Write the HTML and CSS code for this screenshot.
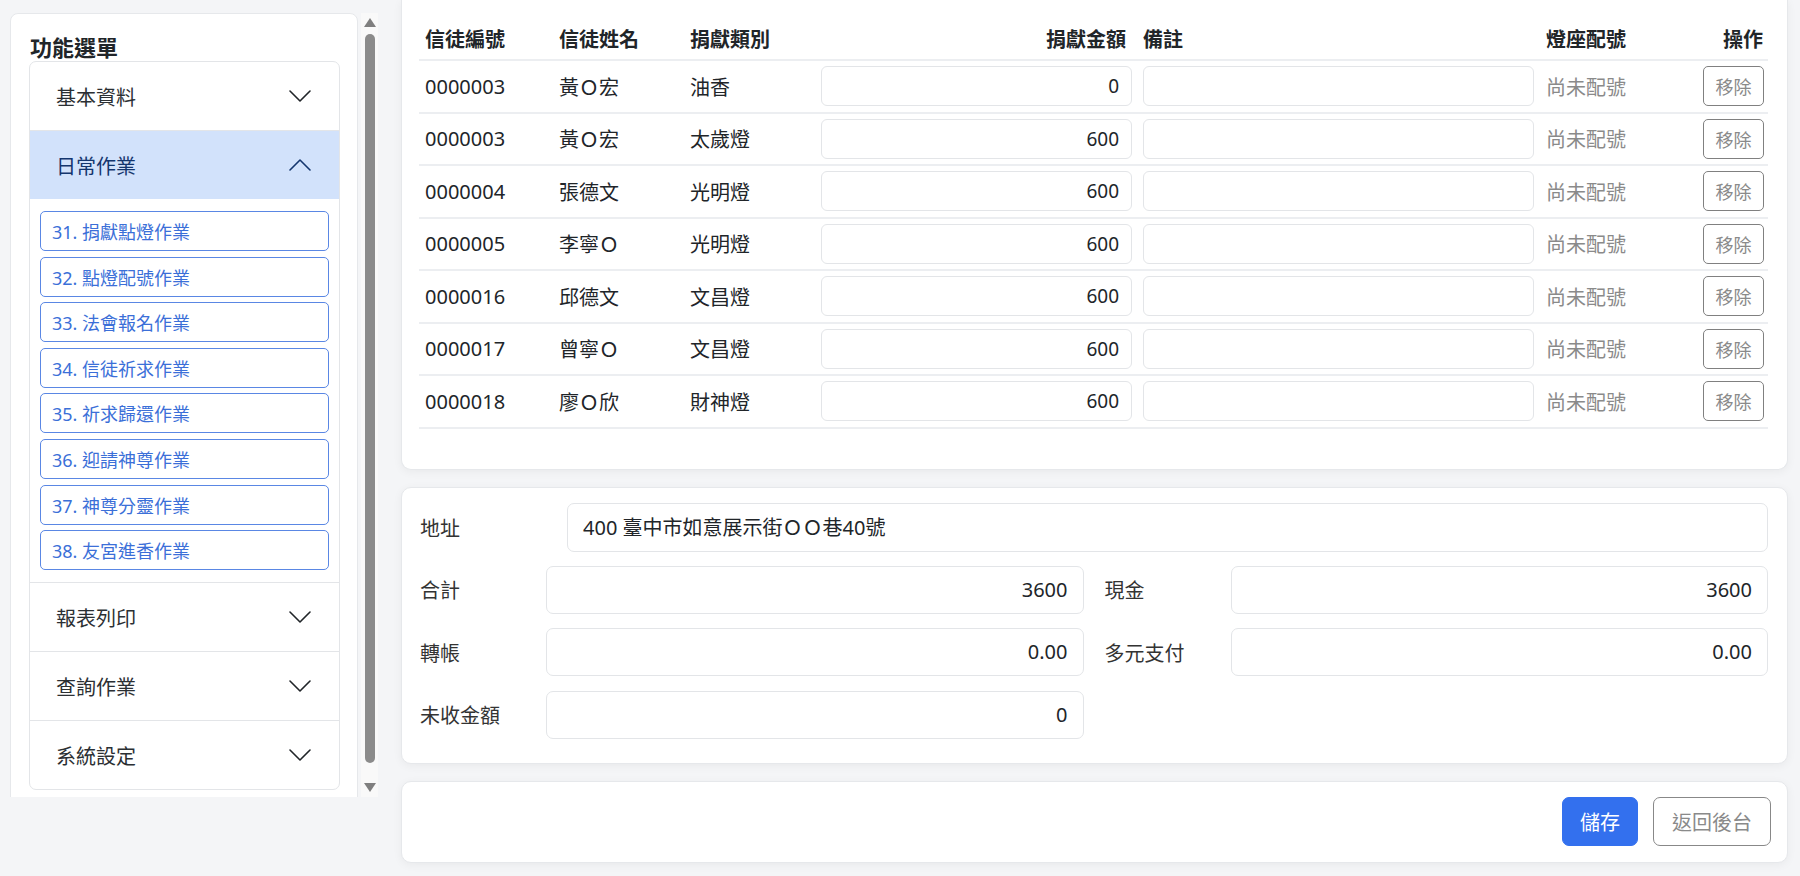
FILE: index.html
```html
<!DOCTYPE html>
<html lang="zh-Hant">
<head>
<meta charset="utf-8">
<title>捐獻點燈作業</title>
<link rel="stylesheet" href="styles.css">
</head>
<body>
<div class="page">
  <aside class="sidebar">
    <div class="side-card">
      <div class="side-title">功能選單</div>
      <div class="accordion">
        <div class="acc-item">
          <div class="acc-head"><span>基本資料</span><svg class="chev" viewBox="0 0 22 12" width="22" height="12"><path d="M1 1 L11 11 L21 1"/></svg></div>
        </div>
        <div class="acc-item active">
          <div class="acc-head"><span>日常作業</span><svg class="chev" viewBox="0 0 22 12" width="22" height="12"><path d="M1 11 L11 1 L21 11"/></svg></div>
          <div class="acc-body">
            <div class="sub-link">31. 捐獻點燈作業</div>
            <div class="sub-link">32. 點燈配號作業</div>
            <div class="sub-link">33. 法會報名作業</div>
            <div class="sub-link">34. 信徒祈求作業</div>
            <div class="sub-link">35. 祈求歸還作業</div>
            <div class="sub-link">36. 迎請神尊作業</div>
            <div class="sub-link">37. 神尊分靈作業</div>
            <div class="sub-link">38. 友宮進香作業</div>
          </div>
        </div>
        <div class="acc-item">
          <div class="acc-head"><span>報表列印</span><svg class="chev" viewBox="0 0 22 12" width="22" height="12"><path d="M1 1 L11 11 L21 1"/></svg></div>
        </div>
        <div class="acc-item">
          <div class="acc-head"><span>查詢作業</span><svg class="chev" viewBox="0 0 22 12" width="22" height="12"><path d="M1 1 L11 11 L21 1"/></svg></div>
        </div>
        <div class="acc-item">
          <div class="acc-head"><span>系統設定</span><svg class="chev" viewBox="0 0 22 12" width="22" height="12"><path d="M1 1 L11 11 L21 1"/></svg></div>
        </div>
      </div>
    </div>
    <div class="scrollbar">
      <div class="sb-up"></div>
      <div class="sb-thumb"></div>
      <div class="sb-down"></div>
    </div>
  </aside>

  <main class="main">
    <section class="panel panel-table">
      <div class="trow thead">
        <div class="c">信徒編號</div>
        <div class="c">信徒姓名</div>
        <div class="c">捐獻類別</div>
        <div class="c c-amt-h">捐獻金額</div>
        <div class="c c-note">備註</div>
        <div class="c">燈座配號</div>
        <div class="c c-op">操作</div>
      </div>
      <div class="trow">
        <div class="c">0000003</div><div class="c">黃Ｏ宏</div><div class="c">油香</div>
        <div class="c"><div class="tinput num">0</div></div>
        <div class="c c-note"><div class="tinput"></div></div>
        <div class="c muted">尚未配號</div>
        <div class="c c-op"><div class="btn-remove">移除</div></div>
      </div>
      <div class="trow">
        <div class="c">0000003</div><div class="c">黃Ｏ宏</div><div class="c">太歲燈</div>
        <div class="c"><div class="tinput num">600</div></div>
        <div class="c c-note"><div class="tinput"></div></div>
        <div class="c muted">尚未配號</div>
        <div class="c c-op"><div class="btn-remove">移除</div></div>
      </div>
      <div class="trow">
        <div class="c">0000004</div><div class="c">張德文</div><div class="c">光明燈</div>
        <div class="c"><div class="tinput num">600</div></div>
        <div class="c c-note"><div class="tinput"></div></div>
        <div class="c muted">尚未配號</div>
        <div class="c c-op"><div class="btn-remove">移除</div></div>
      </div>
      <div class="trow">
        <div class="c">0000005</div><div class="c">李寧Ｏ</div><div class="c">光明燈</div>
        <div class="c"><div class="tinput num">600</div></div>
        <div class="c c-note"><div class="tinput"></div></div>
        <div class="c muted">尚未配號</div>
        <div class="c c-op"><div class="btn-remove">移除</div></div>
      </div>
      <div class="trow">
        <div class="c">0000016</div><div class="c">邱德文</div><div class="c">文昌燈</div>
        <div class="c"><div class="tinput num">600</div></div>
        <div class="c c-note"><div class="tinput"></div></div>
        <div class="c muted">尚未配號</div>
        <div class="c c-op"><div class="btn-remove">移除</div></div>
      </div>
      <div class="trow">
        <div class="c">0000017</div><div class="c">曾寧Ｏ</div><div class="c">文昌燈</div>
        <div class="c"><div class="tinput num">600</div></div>
        <div class="c c-note"><div class="tinput"></div></div>
        <div class="c muted">尚未配號</div>
        <div class="c c-op"><div class="btn-remove">移除</div></div>
      </div>
      <div class="trow">
        <div class="c">0000018</div><div class="c">廖Ｏ欣</div><div class="c">財神燈</div>
        <div class="c"><div class="tinput num">600</div></div>
        <div class="c c-note"><div class="tinput"></div></div>
        <div class="c muted">尚未配號</div>
        <div class="c c-op"><div class="btn-remove">移除</div></div>
      </div>
    </section>

    <section class="panel panel-form">
      <div class="addr-row">
        <div class="flabel addr-label">地址</div>
        <div class="finput addr-input">400 臺中市如意展示街ＯＯ巷40號</div>
      </div>
      <div class="form-grid">
        <div class="field"><div class="flabel">合計</div><div class="finput num">3600</div></div>
        <div class="field"><div class="flabel">現金</div><div class="finput num">3600</div></div>
        <div class="field"><div class="flabel">轉帳</div><div class="finput num">0.00</div></div>
        <div class="field"><div class="flabel">多元支付</div><div class="finput num">0.00</div></div>
        <div class="field"><div class="flabel">未收金額</div><div class="finput num">0</div></div>
      </div>
    </section>

    <section class="panel panel-actions">
      <div class="btn btn-primary">儲存</div>
      <div class="btn btn-outline">返回後台</div>
    </section>
  </main>
</div>
</body>
</html>
```

FILE: styles.css
```css
* { box-sizing: border-box; }

html, body {
  margin: 0;
  padding: 0;
  background: #f4f5f7;
}

body {
  font-family: "Noto Sans", "Noto Sans CJK TC", sans-serif;
  color: #212529;
  font-size: 20px;
  width: 1800px;
  height: 876px;
  overflow: hidden;
}

.page {
  display: flex;
  align-items: flex-start;
  padding-left: 10px;
}

/* ---------- Sidebar ---------- */
.sidebar {
  margin-top: 13px;
  width: 368px;
  height: 784px;
  overflow: hidden;
  display: flex;
  align-items: flex-start;
}

.side-card {
  width: 348px;
  flex: none;
  background: #fff;
  border: 1px solid #e6e8eb;
  border-radius: 8px;
  padding: 19px 17px 18px 18px;
}

.side-title {
  font-size: 22px;
  font-weight: 700;
  line-height: 28px;
  height: 28px;
  padding-left: 1px;
  color: #212529;
}

.accordion {
  border: 1px solid #e3e5e8;
  border-radius: 7px;
  overflow: hidden;
  background: #fff;
}

.acc-item + .acc-item {
  border-top: 1px solid #e3e5e8;
}

.acc-head {
  height: 68px;
  display: flex;
  align-items: center;
  justify-content: space-between;
  padding: 0 28px 0 26px;
  font-size: 20px;
  color: #2b2f33;
}

.chev {
  display: block;
  fill: none;
  stroke: #212529;
  stroke-width: 1.6;
  stroke-linecap: round;
  stroke-linejoin: round;
}

.acc-item.active .acc-head {
  background: #d2e2fb;
  color: #14366e;
}

.acc-item.active .chev {
  stroke: #14366e;
}

.acc-body {
  padding: 12px 10px;
  display: flex;
  flex-direction: column;
  gap: 5.6px;
}

.sub-link {
  height: 40px;
  border: 1px solid #5a87e4;
  border-radius: 5px;
  display: flex;
  align-items: center;
  padding-left: 11px;
  font-size: 18px;
  color: #3b6fd8;
}

/* fake classic scrollbar */
.scrollbar {
  width: 17px;
  height: 784px;
  margin-left: 3px;
  flex: none;
  background: #f9f9f9;
  display: flex;
  flex-direction: column;
  align-items: center;
  padding: 5px 0;
}

.sb-up {
  width: 0;
  height: 0;
  border-left: 6px solid transparent;
  border-right: 6px solid transparent;
  border-bottom: 9px solid #7f7f7f;
}

.sb-thumb {
  flex: 1;
  width: 10px;
  margin: 7px 0 20px;
  border-radius: 5px;
  background: #8b8b8b;
}

.sb-down {
  width: 0;
  height: 0;
  border-left: 6px solid transparent;
  border-right: 6px solid transparent;
  border-top: 9px solid #7f7f7f;
}

/* ---------- Main ---------- */
.main {
  margin-left: 23px;
  width: 1387px;
  display: flex;
  flex-direction: column;
  gap: 17px;
}

.panel {
  background: #fff;
  border: 1px solid #e6e8eb;
  border-radius: 10px;
  box-shadow: 0 2px 10px rgba(0, 0, 0, 0.05);
}

.panel-table {
  border-top: none;
  border-radius: 0 0 10px 10px;
  padding: 18px 19px 40px 17px;
}

.trow {
  display: grid;
  grid-template-columns: 134px 131px 131px 323px 402px 128px 100px;
  align-items: center;
  height: 52.5px;
  border-bottom: 2px solid #eceef1;
}

.trow.thead {
  height: 43px;
  font-weight: 700;
}

.c {
  padding: 0 6px;
  white-space: nowrap;
}

.c-amt-h {
  text-align: right;
  padding-right: 12px;
}

.c-note {
  padding: 0 6px 0 5px;
}

.c-op {
  display: flex;
  justify-content: flex-end;
  padding-right: 4px;
}

.thead .c-op {
  padding-right: 5px;
}

.muted {
  color: #8a8a8a;
}

.tinput {
  height: 40px;
  border: 1px solid #e3e5e8;
  border-radius: 6px;
  background: #fff;
  font-size: 19px;
  line-height: 38px;
  padding: 0 12px;
  color: #212529;
}

.tinput.num {
  text-align: right;
}

.btn-remove {
  width: 61px;
  height: 40px;
  border: 1px solid #808080;
  border-radius: 5px;
  color: #8a8a8a;
  font-size: 18px;
  display: flex;
  align-items: center;
  justify-content: center;
}

/* form panel */
.panel-form {
  padding: 15px 19px 24px 18px;
}

.addr-row {
  display: flex;
  align-items: center;
  height: 49px;
}

.flabel {
  font-size: 20px;
  color: #333;
  flex: none;
  width: 126px;
  white-space: nowrap;
}

.addr-label {
  width: 147px;
}

.finput {
  flex: 1;
  height: 48px;
  border: 1px solid #e3e5e8;
  border-radius: 7px;
  font-size: 20px;
  line-height: 46px;
  padding: 0 15px;
  color: #212529;
  white-space: nowrap;
}

.addr-input {
  height: 49px;
  line-height: 47px;
}

.finput.num {
  text-align: right;
}

.form-grid {
  margin-top: 14px;
  display: grid;
  grid-template-columns: 1fr 1fr;
  column-gap: 21px;
  row-gap: 14.5px;
}

.field {
  display: flex;
  align-items: center;
}

/* actions panel */
.panel-actions {
  padding: 15px 16px 16px;
  display: flex;
  justify-content: flex-end;
  gap: 15px;
}

.btn {
  height: 49px;
  border-radius: 7px;
  padding: 0 17px;
  font-size: 20px;
  display: flex;
  align-items: center;
  justify-content: center;
}

.btn-primary {
  background: #3370ee;
  color: #fff;
  border: 1px solid #3370ee;
}

.btn-outline {
  background: #fff;
  color: #8a8a8a;
  border: 1px solid #888;
  padding: 0 18px;
}
```
